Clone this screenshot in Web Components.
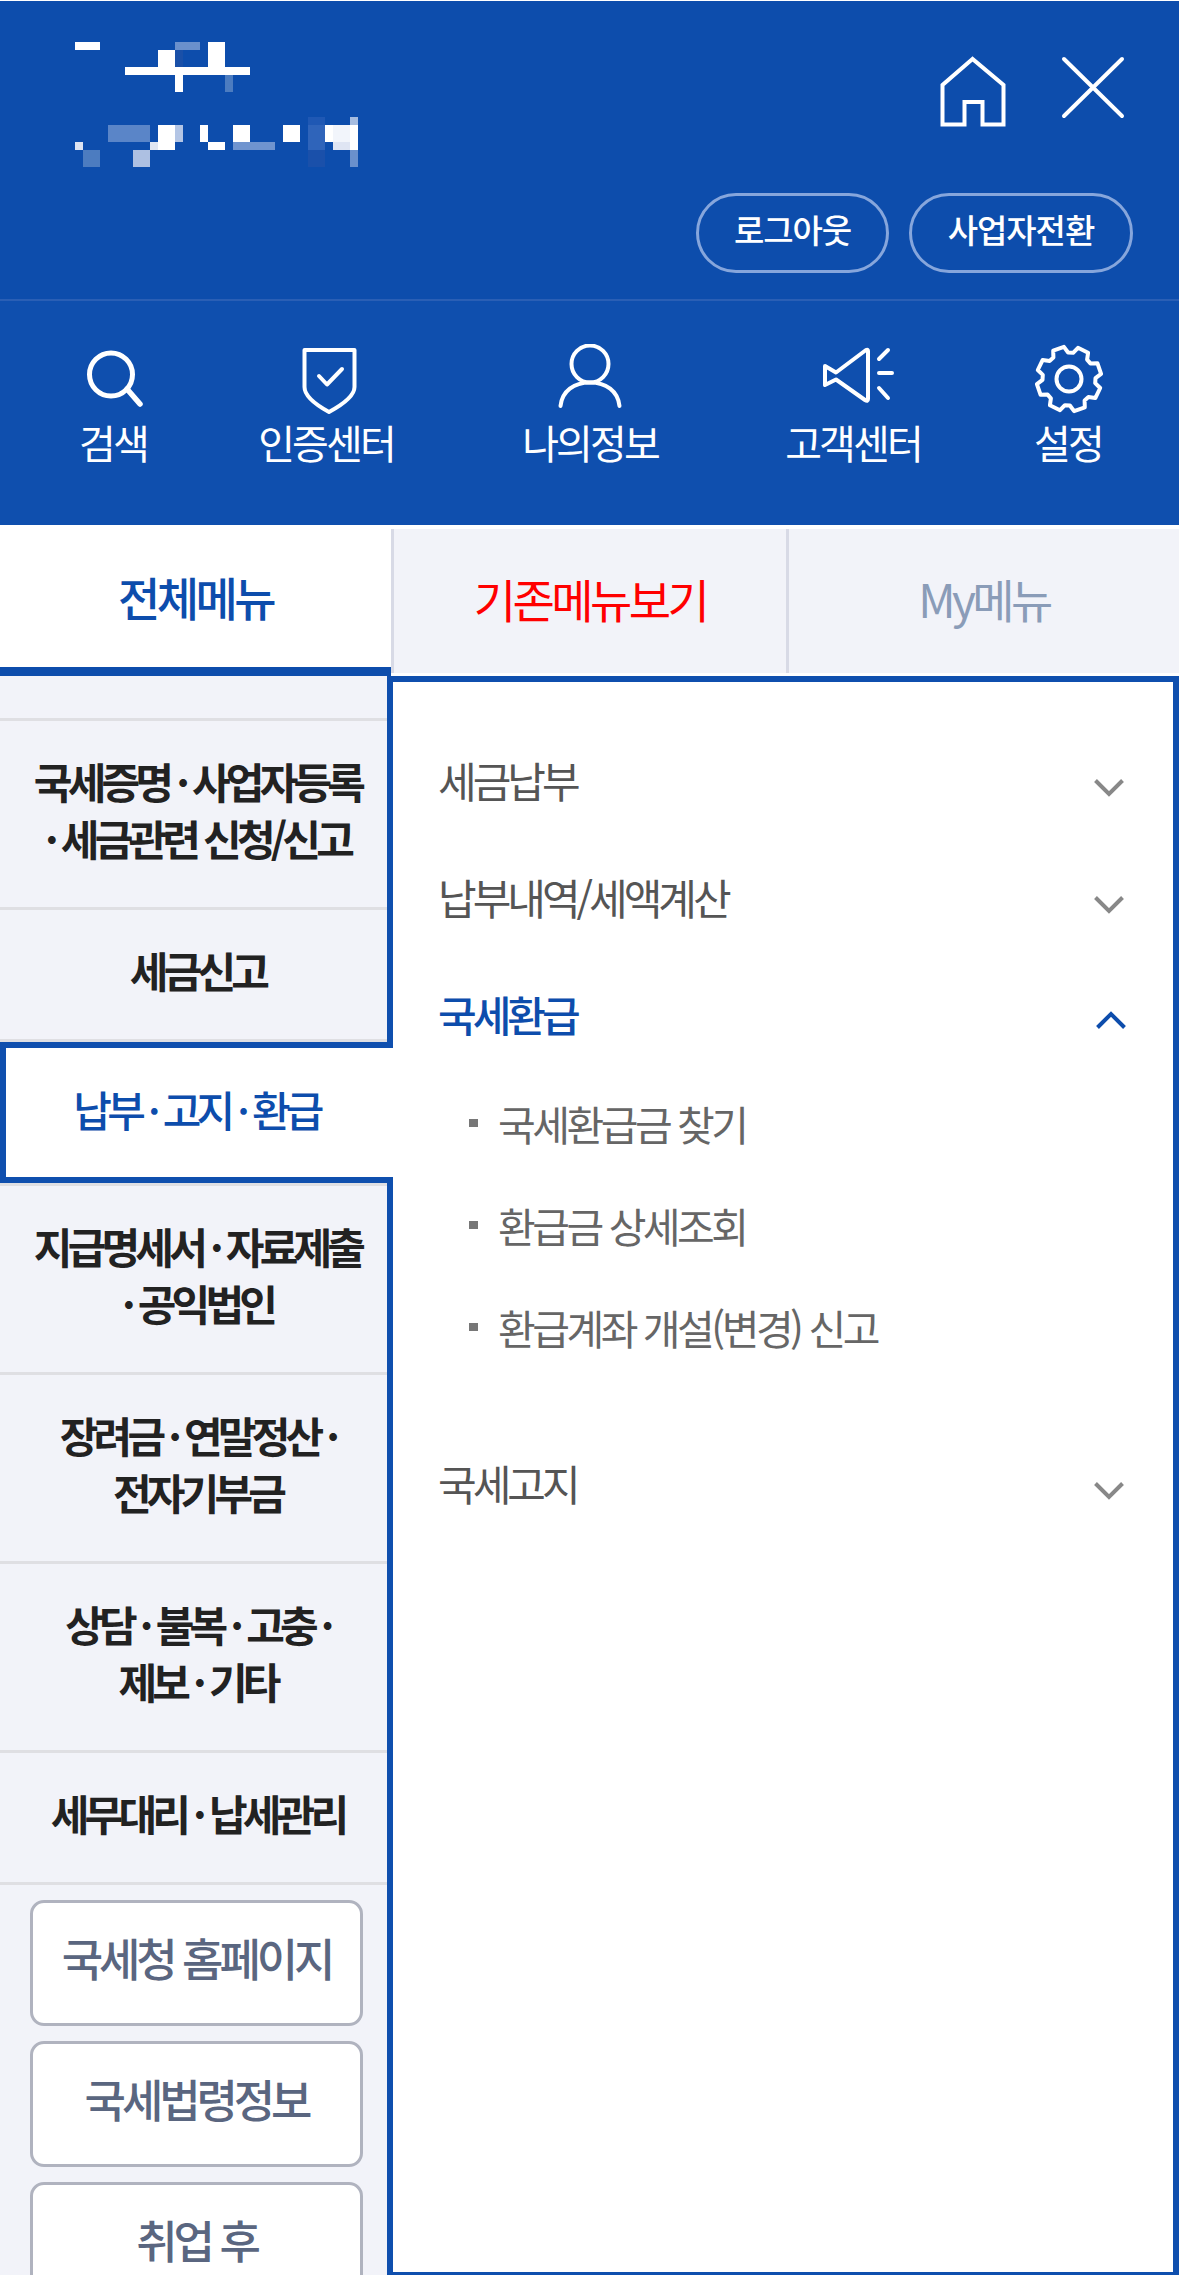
<!DOCTYPE html>
<html lang="ko">
<head>
<meta charset="utf-8">
<title>전체메뉴</title>
<style>
  html, body { margin: 0; padding: 0; background: #fff; }
  body { font-family: "Noto Sans CJK KR", "Noto Sans", sans-serif; width: 1179px; height: 2275px; overflow: hidden; }
</style>
</head>
<body>
<top-header>
  <pill-button style="width:193px">로그아웃</pill-button>
  <pill-button style="width:224px">사업자전환</pill-button>
</top-header>
<quick-nav>
  <quick-item icon="search" w="186" cx="113">검색</quick-item>
  <quick-item icon="shield" w="240" cx="326">인증센터</quick-item>
  <quick-item icon="user" w="288" cx="590">나의정보</quick-item>
  <quick-item icon="speaker" w="238" cx="853">고객센터</quick-item>
  <quick-item icon="gear" w="192" cx="1068">설정</quick-item>
</quick-nav>
<menu-tabs></menu-tabs>
<menu-body>
  <side-item slot="side" class="stub"></side-item>
  <side-item slot="side" lines="2">국세증명 · 사업자등록<br>· 세금관련 신청/신고</side-item>
  <side-item slot="side">세금신고</side-item>
  <side-item slot="side" active>납부 · 고지 · 환급</side-item>
  <side-item slot="side" lines="2" top>지급명세서 · 자료제출<br>· 공익법인</side-item>
  <side-item slot="side" lines="2">장려금 · 연말정산 ·<br>전자기부금</side-item>
  <side-item slot="side" lines="2">상담 · 불복 · 고충 ·<br>제보 · 기타</side-item>
  <side-item slot="side">세무대리 · 납세관리</side-item>
  <link-box slot="side">국세청 홈페이지</link-box>
  <link-box slot="side">국세법령정보</link-box>
  <link-box slot="side">취업 후</link-box>

  <acc-row>세금납부</acc-row>
  <acc-row>납부내역/세액계산</acc-row>
  <acc-row open>국세환급
    <sub-link slot="sub">국세환급금 찾기</sub-link>
    <sub-link slot="sub">환급금 상세조회</sub-link>
    <sub-link slot="sub">환급계좌 개설(변경) 신고</sub-link>
  </acc-row>
  <acc-row>국세고지</acc-row>
</menu-body>

<script>
// 흐릿하게 가려진 로고 블록들 [x, y, w, h, color]
const LOGO = [
  [75,42,25,8,'#fff'],[125,67,125,8,'#fff'],[158,50,17,17,'#fff'],[175,42,25,8,'#6a90cc'],
  [175,50,8,17,'#1a50a8'],[208,42,17,25,'#fff'],[175,75,8,17,'#fff'],[225,75,8,17,'#4c7cc0'],
  [108,125,42,17,'#5a85c8'],[158,125,17,25,'#fff'],[175,125,8,17,'#b3c5e5'],[150,142,8,8,'#e0e6f2'],
  [75,142,8,8,'#dde4f2'],[83,150,17,17,'#4c7cc0'],[133,150,17,17,'#adc0e2'],[200,125,8,17,'#fff'],
  [208,142,17,8,'#fff'],[233,125,17,17,'#fff'],[233,142,42,8,'#6f94cf'],[283,125,17,17,'#fff'],
  [308,117,17,8,'#1f58b4'],[308,125,17,25,'#2f64ba'],[308,150,17,17,'#1a50aa'],[325,125,8,17,'#fff'],
  [333,125,17,17,'#f2f5fb'],[333,142,17,8,'#dfe5f3'],[350,125,8,25,'#fff'],[350,117,8,8,'#a5bce0'],
  [350,150,8,17,'#6a90cc']
];

class TopHeader extends HTMLElement {
  constructor() {
    super();
    const rects = LOGO.map(r => `<rect x="${r[0]}" y="${r[1]}" width="${r[2]}" height="${r[3]}" fill="${r[4]}"/>`).join('');
    this.attachShadow({ mode: 'open' }).innerHTML = `
      <style>
        :host { display: flex; justify-content: space-between; box-sizing: border-box; height: 300px; margin-top: 1px;
                background: #0d4dac; border-bottom: 2px solid #2a5fb5; }
        .logo { display: block; margin: 41px 0 0 75px; }
        .right { display: flex; flex-direction: column; align-items: flex-end; padding-right: 46px; }
        .icons { display: flex; gap: 55px; margin: 55px 8px 0 0; }
        .btns { display: flex; gap: 20px; margin-top: 66px; }
        svg { display: block; }
      </style>
      <svg class="logo" width="283" height="125" viewBox="75 42 283 125">${rects}</svg>
      <div class="right">
        <div class="icons">
          <svg width="66" height="71" viewBox="938 56 66 71" fill="none" stroke="#fff" stroke-width="4" stroke-linejoin="miter">
            <path d="M970.5 59 L940.5 85 V124.5 H962.5 V102 H980.5 V124.5 H1001.5 V85 Z"/>
          </svg>
          <svg width="64" height="64" viewBox="1059 60 64 64" fill="none" stroke="#fff" stroke-width="4" stroke-linecap="round">
            <path d="M1062 63 L1120 120 M1120 63 L1062 120"/>
          </svg>
        </div>
        <div class="btns"><slot></slot></div>
      </div>`;
  }
}

class PillButton extends HTMLElement {
  constructor() {
    super();
    this.attachShadow({ mode: 'open' }).innerHTML = `
      <style>
        :host { display: flex; align-items: center; justify-content: center; box-sizing: border-box; height: 80px; padding-bottom: 8px;
                border: 3px solid #86a6dc; border-radius: 40px; color: #fff; font-size: 33px; font-weight: 500; letter-spacing: -1.1px; }
      </style><slot></slot>`;
  }
}

class QuickNav extends HTMLElement {
  constructor() {
    super();
    this.attachShadow({ mode: 'open' }).innerHTML = `
      <style>
        :host { display: flex; box-sizing: border-box; height: 224px; padding: 43px 0 0 20px; background: #0f4fae; }
      </style><slot></slot>`;
  }
}

// 톱니바퀴 외곽선을 각도로 계산
function gearPath(cx, cy) {
  let d = '';
  const pt = (r, deg) => {
    const a = deg * Math.PI / 180;
    return (cx + r * Math.cos(a)).toFixed(1) + ' ' + (cy + r * Math.sin(a)).toFixed(1);
  };
  for (let i = 0; i < 8; i++) {
    const a = -64 + i * 45;
    d += (i ? 'L' : 'M') + pt(26.5, a - 17) + 'L' + pt(32.5, a - 10) + 'L' + pt(32.5, a + 10) + 'L' + pt(26.5, a + 17);
  }
  return d + 'Z';
}

const ICONS = {
  search: `<circle cx="111" cy="375.5" r="21.5" stroke-width="5"/><path d="M127 390 L140 405" stroke-width="5.5"/>`,
  shield: `<path d="M304.5 351 H354.5 V388 C354.5 398 340 407 329 413 C318 407 304.5 398 304.5 388 Z"/><path d="M319 377 L327 385.5 L342 370"/>`,
  user: `<circle cx="590" cy="365" r="18.5"/><path d="M560.5 407 C562 392 574 383.5 590 383.5 C606 383.5 618 392 619.5 407"/>`,
  speaker: `<path d="M825 367 L836 373.5 L866 351 Q868 350 868 352 V400 Q868 403 865 401 L836 380.5 L825 386 Z"/><path d="M879 360 L888 351 M879 374 H892 M879 389 L888 399"/>`,
  gear: `<path d="${gearPath(1069, 380)}"/><circle cx="1069" cy="380" r="12.5"/>`
};

class QuickItem extends HTMLElement {
  constructor() {
    super();
    const cx = +this.getAttribute('cx');
    this.attachShadow({ mode: 'open' }).innerHTML = `
      <style>
        :host { display: flex; flex-direction: column; align-items: center; flex: none; color: #fff;
                font-size: 40px; line-height: 52px; letter-spacing: -2.9px; width: ${this.getAttribute('w')}px; }
        svg { display: block; }
      </style>
      <svg width="90" height="72" viewBox="${cx - 45} 345 90 72" fill="none" stroke="#fff" stroke-width="4" stroke-linecap="round" stroke-linejoin="round">${ICONS[this.getAttribute('icon')]}</svg>
      <slot></slot>`;
  }
}

class MenuTabs extends HTMLElement {
  constructor() {
    super();
    this.attachShadow({ mode: 'open' }).innerHTML = `
      <style>
        :host { display: flex; height: 150px; background: #fff; margin-top: 1px; }
        div { display: flex; align-items: center; justify-content: center; box-sizing: border-box;
              font-size: 46px; font-weight: 400; letter-spacing: -3.6px; padding-bottom: 6px; }
        .all { width: 391px; height: 150px; color: #0d4dac; border-bottom: 9px solid #0d4dac; padding-bottom: 2px; font-weight: 500; }
        .old, .my { margin-top: 3px; height: 144px; background: #f2f3f9; border-left: 3px solid #d8dae6; }
        .old { width: 395px; color: #f00; }
        .my { width: 393px; color: #8a9cb8; }
      </style>
      <div class="all">전체메뉴</div>
      <div class="old">기존메뉴보기</div>
      <div class="my">My메뉴</div>`;
  }
}

class MenuBody extends HTMLElement {
  constructor() {
    super();
    this.attachShadow({ mode: 'open' }).innerHTML = `
      <style>
        :host { display: flex; height: 1599px; overflow: hidden; }
        .side { box-sizing: border-box; width: 393px; flex: none; background: #f2f3f9; border-right: 6px solid #0f4fae; display: flex; flex-direction: column; }
        .panel { flex: 1; box-sizing: border-box; border: solid #0f4fae; border-width: 6px 6px 3px 0; padding: 39px 0 0 45px; }
      </style>
      <div class="side"><slot name="side"></slot></div>
      <div class="panel"><slot></slot></div>`;
  }
}

class SideItem extends HTMLElement {
  constructor() {
    super();
    this.attachShadow({ mode: 'open' }).innerHTML = `
      <style>
        :host { display: flex; flex: none; align-items: center; justify-content: center; box-sizing: border-box; height: 132px;
                text-align: center; color: #222; font-size: 42px; line-height: 57px; font-weight: 700; letter-spacing: -4.8px;
                border-bottom: 3px solid #dfdfe3; padding: 0 0 10px 8px; }
        :host([lines="2"]) { height: 189px; }
        :host([top]) { height: 192px; border-top: 3px solid #dfdfe3; }
        :host(.stub) { height: 45px; }
        :host([active]) { position: relative; z-index: 1; height: 141px; margin: 0 -6px 0 0; background: #fff; color: #0d4dac; font-weight: 500;
                          box-shadow: inset 6px 0 0 #0f4fae, inset 0 6px 0 #0f4fae, inset 0 -6px 0 #0f4fae; border-bottom: 0; padding: 0 0 8px 0; }
      </style><slot></slot>`;
  }
}

class LinkBox extends HTMLElement {
  constructor() {
    super();
    this.attachShadow({ mode: 'open' }).innerHTML = `
      <style>
        :host { display: flex; flex: none; align-items: center; justify-content: center; box-sizing: border-box; width: 333px; height: 126px;
                margin: 15px 0 0 30px; background: #fff; border: 3px solid #b0b3bf; border-radius: 14px;
                color: #5a6680; font-size: 45px; font-weight: 500; letter-spacing: -4.1px; padding-bottom: 12px; }
      </style><slot></slot>`;
  }
}

class AccRow extends HTMLElement {
  constructor() {
    super();
    const open = this.hasAttribute('open');
    this.attachShadow({ mode: 'open' }).innerHTML = `
      <style>
        :host { display: block; color: #555; }
        .head { display: flex; align-items: center; justify-content: space-between; height: 117px; padding-right: 49px;
                font-size: 42px; letter-spacing: -4px; }
        :host([open]) .head { color: #0d4dac; font-weight: 500; }
        svg { display: block; margin-top: 16px; }
        :host([open]) svg { margin-right: -2px; margin-top: 13px; }
        .subs { padding: 0 0 46px 0; }
      </style>
      <div class="head"><span><slot></slot></span>
        <svg width="30" height="18" viewBox="0 0 30 18" fill="none" stroke="${open ? '#0d4dac' : '#888'}" stroke-width="4">
          <path d="${open ? 'M1.5 16.5 L15 3 L28.5 16.5' : 'M1.5 1.5 L15 15 L28.5 1.5'}"/>
        </svg>
      </div>
      ${open ? '<div class="subs"><slot name="sub"></slot></div>' : ''}`;
  }
}

class SubLink extends HTMLElement {
  constructor() {
    super();
    this.attachShadow({ mode: 'open' }).innerHTML = `
      <style>
        :host { display: flex; align-items: center; height: 102px; color: #666; font-size: 41px; letter-spacing: -3.5px; }
        i { width: 9px; height: 8px; margin: 0 20px 0 31px; background: #777; flex: none; }
      </style><i></i><slot></slot>`;
  }
}

customElements.define('top-header', TopHeader);
customElements.define('pill-button', PillButton);
customElements.define('quick-nav', QuickNav);
customElements.define('quick-item', QuickItem);
customElements.define('menu-tabs', MenuTabs);
customElements.define('menu-body', MenuBody);
customElements.define('side-item', SideItem);
customElements.define('link-box', LinkBox);
customElements.define('acc-row', AccRow);
customElements.define('sub-link', SubLink);
</script>
</body>
</html>
